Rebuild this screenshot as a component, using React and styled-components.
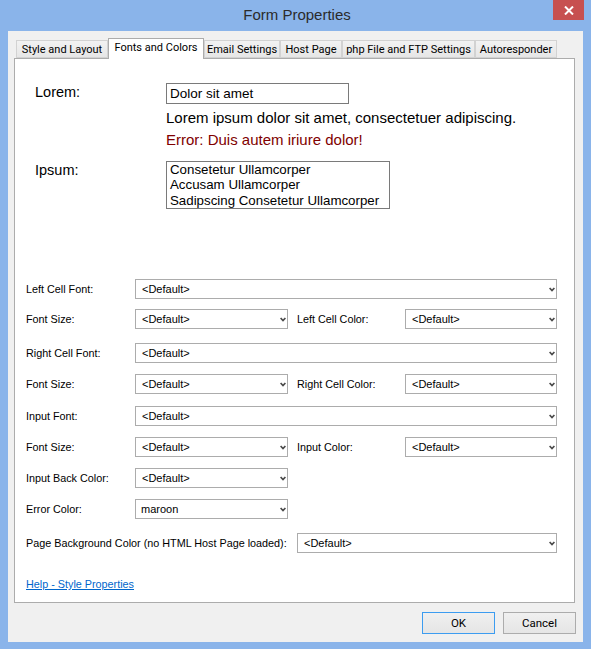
import React from "react";
import styled, { createGlobalStyle } from "styled-components";

const GlobalStyle = createGlobalStyle`
  html, body { margin: 0; padding: 0; background: #8ab4ea; }
  * { box-sizing: border-box; }
`;

const Window = styled.div`
  width: 591px;
  height: 649px;
  background: #8ab4ea;
  display: flex;
  flex-direction: column;
  padding: 0 8px 7px 8px;
  font-family: "Liberation Sans", Arial, sans-serif;
`;

const TitleBar = styled.div`
  height: 31px;
  display: grid;
  grid-template-columns: 1fr auto 1fr;
  align-items: start;
  margin-right: -1px;
`;

const Title = styled.div`
  grid-column: 2;
  font-size: 15px;
  line-height: 30px;
  color: #2b2b2b;
  margin-left: 2px;
`;

const CloseButton = styled.div`
  grid-column: 3;
  justify-self: end;
  width: 31px;
  height: 20px;
  background: #c75050;
  display: flex;
  align-items: center;
  justify-content: center;
`;

const Client = styled.div`
  flex: 1;
  background: #f0f0f0;
  display: flex;
  flex-direction: column;
  padding: 7px 8px 8px 6px;
`;

const TabStrip = styled.div`
  display: flex;
  align-items: flex-end;
  height: 21px;
  padding-left: 2px;
  position: relative;
  z-index: 1;
  margin-bottom: -1px;
`;

const Tab = styled.div`
  width: ${(p) => p.$w}px;
  height: ${(p) => (p.$active ? "21px" : "18px")};
  margin: ${(p) => (p.$active ? "0 0" : "0 0 1px 0")};
  background: ${(p) => (p.$active ? "#ffffff" : "linear-gradient(#f2f2f2, #e6e6e6)")};
  border: 1px solid ${(p) => (p.$active ? "#acacac" : "#d2d2d2")};
  border-bottom: ${(p) => (p.$active ? "none" : "1px solid #d2d2d2")};
  font-family: Roboto, "Liberation Sans", sans-serif;
  font-size: 11px;
  color: #000;
  display: flex;
  align-items: center;
  justify-content: center;
  padding-bottom: ${(p) => (p.$active ? "3px" : "0")};
  white-space: nowrap;
  position: relative;
  z-index: ${(p) => (p.$active ? 2 : 1)};
`;

const Panel = styled.div`
  flex: 1;
  background: #ffffff;
  border: 1px solid #acacac;
  display: flex;
  flex-direction: column;
`;

const TopSection = styled.div`
  display: grid;
  grid-template-columns: 131px auto;
  padding: 24px 0 0 20px;
  font-family: "Liberation Sans", Arial, sans-serif;
`;

const BigLabel = styled.div`
  font-size: 14.5px;
  line-height: 18px;
  color: #000;
  margin-top: ${(p) => p.$mt || 0}px;
`;

const TextBox = styled.div`
  width: 183px;
  height: 21px;
  border: 1px solid #7a7a7a;
  font-size: 13.5px;
  line-height: 19px;
  padding-left: 3px;
  color: #000;
`;

const InfoText = styled.div`
  grid-column: 2;
  font-size: 15px;
  line-height: 22px;
  color: ${(p) => (p.$error ? "#800000" : "#000")};
  margin-top: ${(p) => p.$mt || 0}px;
`;

const ListBox = styled.div`
  width: 224px;
  height: 48px;
  border: 1px solid #7a7a7a;
  padding: 0 0 0 3px;
  font-size: 13.3px;
  line-height: 15.4px;
  color: #000;
  margin-top: ${(p) => p.$mt || 0}px;
`;

const Form = styled.div`
  display: flex;
  flex-direction: column;
  padding: 0 0 0 11px;
  margin-top: 70px;
  font-family: "Liberation Sans", Arial, sans-serif;
`;

const Row = styled.div`
  display: grid;
  grid-template-columns: 109px 153px 9px 108px 152px;
  align-items: center;
  height: 20px;
  margin-top: ${(p) => p.$mt || 0}px;
`;

const Label = styled.div`
  font-size: 10.8px;
  color: #000;
  white-space: nowrap;
  grid-column: ${(p) => p.$col || "auto"};
`;

const Select = styled.div`
  grid-column: ${(p) => p.$col || "auto"};
  height: 20px;
  border: 1px solid #acacac;
  background: #fff;
  display: flex;
  align-items: center;
  justify-content: space-between;
  padding: 0 1px 0 ${(p) => (p.$pad ? p.$pad : 6)}px;
  font-size: 11px;
  color: #000;
`;

const Chevron = () => (
  <svg width="6" height="5" viewBox="0 0 6 5">
    <path d="M0.6 1 L3 3.6 L5.4 1" fill="none" stroke="#4a4a4a" strokeWidth="1.7" />
  </svg>
);

const HelpLink = styled.a`
  align-self: flex-start;
  margin: 24px 0 0 11px;
  font-family: "Liberation Sans", Arial, sans-serif;
  font-size: 10.8px;
  line-height: 14px;
  color: #0066cc;
  text-decoration: underline;
`;

const Footer = styled.div`
  display: flex;
  justify-content: flex-end;
  gap: 8px;
  margin-top: 9px;
  margin-right: -1px;
`;

const Button = styled.div`
  width: 73px;
  height: 22px;
  border: 1px solid ${(p) => (p.$default ? "#3c9cf0" : "#acacac")};
  background: linear-gradient(#f0f0f0, #e5e5e5);
  display: flex;
  align-items: center;
  justify-content: center;
  font-family: Roboto, "Liberation Sans", sans-serif;
  font-size: 11.5px;
  color: #000;
`;

const tabs = [
  { label: "Style and Layout", w: 92 },
  { label: "Fonts and Colors", w: 96 },
  { label: "Email Settings", w: 76 },
  { label: "Host Page", w: 62 },
  { label: "php File and FTP Settings", w: 133 },
  { label: "Autoresponder", w: 82 },
];

const Field = ({ children, col, pad }) => (
  <Select $col={col} $pad={pad}>
    {children}
    <Chevron />
  </Select>
);

export default function App() {
  return (
    <>
      <GlobalStyle />
      <Window>
        <TitleBar>
          <Title>Form Properties</Title>
          <CloseButton>
            <svg width="10" height="9" viewBox="0 0 10 9">
              <path d="M1 0.5 L9 8.5 M9 0.5 L1 8.5" stroke="#fff" strokeWidth="2" />
            </svg>
          </CloseButton>
        </TitleBar>
        <Client>
          <TabStrip>
            {tabs.map((t, i) => (
              <Tab key={t.label} $w={t.w} $active={i === 1}>
                {t.label}
              </Tab>
            ))}
          </TabStrip>
          <Panel>
            <TopSection>
              <BigLabel>Lorem:</BigLabel>
              <TextBox>Dolor sit amet</TextBox>
              <InfoText $mt={3}>Lorem ipsum dolor sit amet, consectetuer adipiscing.</InfoText>
              <InfoText $error>Error: Duis autem iriure dolor!</InfoText>
              <BigLabel $mt={10}>Ipsum:</BigLabel>
              <ListBox $mt={10}>
                <div>Consetetur Ullamcorper</div>
                <div>Accusam Ullamcorper</div>
                <div>Sadipscing Consetetur Ullamcorper</div>
              </ListBox>
            </TopSection>
            <Form>
              <Row>
                <Label>Left Cell Font:</Label>
                <Field col="2 / 6">&lt;Default&gt;</Field>
              </Row>
              <Row $mt={10}>
                <Label>Font Size:</Label>
                <Field>&lt;Default&gt;</Field>
                <Label $col="4">Left Cell Color:</Label>
                <Field>&lt;Default&gt;</Field>
              </Row>
              <Row $mt={14}>
                <Label>Right Cell Font:</Label>
                <Field col="2 / 6">&lt;Default&gt;</Field>
              </Row>
              <Row $mt={11}>
                <Label>Font Size:</Label>
                <Field>&lt;Default&gt;</Field>
                <Label $col="4">Right Cell Color:</Label>
                <Field>&lt;Default&gt;</Field>
              </Row>
              <Row $mt={12}>
                <Label>Input Font:</Label>
                <Field col="2 / 6">&lt;Default&gt;</Field>
              </Row>
              <Row $mt={11}>
                <Label>Font Size:</Label>
                <Field>&lt;Default&gt;</Field>
                <Label $col="4">Input Color:</Label>
                <Field>&lt;Default&gt;</Field>
              </Row>
              <Row $mt={11}>
                <Label>Input Back Color:</Label>
                <Field>&lt;Default&gt;</Field>
              </Row>
              <Row $mt={11}>
                <Label>Error Color:</Label>
                <Field pad={5}>maroon</Field>
              </Row>
              <Row $mt={14}>
                <Label $col="1 / 4">Page Background Color (no HTML Host Page loaded):</Label>
                <Field col="4 / 6">&lt;Default&gt;</Field>
              </Row>
            </Form>
            <HelpLink href="#">Help - Style Properties</HelpLink>
          </Panel>
          <Footer>
            <Button $default>OK</Button>
            <Button>Cancel</Button>
          </Footer>
        </Client>
      </Window>
    </>
  );
}
